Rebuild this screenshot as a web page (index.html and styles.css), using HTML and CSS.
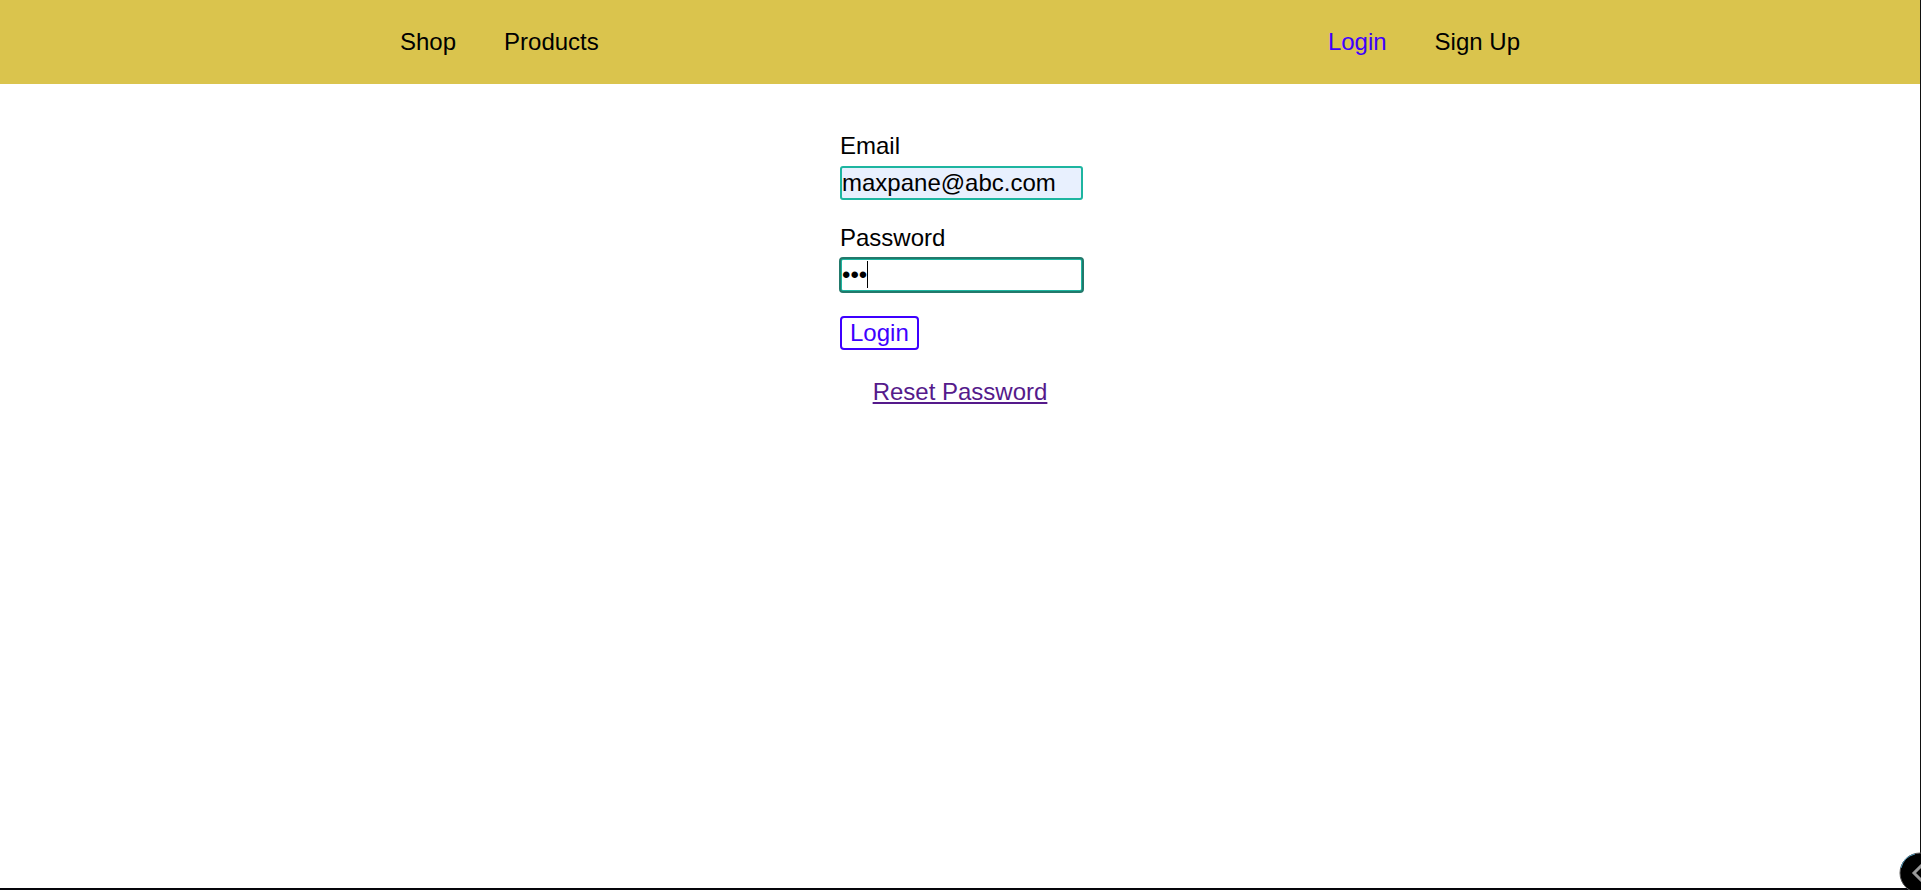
FILE: index.html
```html
<!DOCTYPE html>
<html lang="en">
<head>
<meta charset="utf-8">
<meta name="viewport" content="width=device-width, initial-scale=1">
<title>Login</title>
<link rel="stylesheet" href="styles.css">
</head>
<body>
<header class="main-header">
  <nav class="nav">
    <ul class="nav-list">
      <li><a class="nav-link" href="#shop">Shop</a></li>
      <li><a class="nav-link" href="#products">Products</a></li>
    </ul>
    <ul class="nav-list">
      <li><a class="nav-link active" href="#login">Login</a></li>
      <li><a class="nav-link" href="#signup">Sign Up</a></li>
    </ul>
  </nav>
</header>
<main class="content">
  <form class="login-form">
    <div class="form-control">
      <label for="email">Email</label>
      <input class="field filled" type="email" id="email" name="email" value="maxpane@abc.com">
    </div>
    <div class="form-control">
      <label for="password">Password</label>
      <div class="caret-box">
        <input class="field" type="password" id="password" name="password" value="abc">
      </div>
    </div>
    <button class="btn" type="submit">Login</button>
  </form>
  <a class="reset-link" href="#reset">Reset Password</a>
</main>
<button class="side-toggle" type="button" aria-label="Open panel">
  <svg width="42" height="42" viewBox="0 0 42 42" aria-hidden="true">
    <circle cx="21" cy="21" r="20" fill="#000" stroke="#555" stroke-width="1"/>
    <path d="M2 16A19 19 0 0 1 16 2" fill="none" stroke="#4f94b5" stroke-width="1"/>
    <path d="M23 13L15 21L23 29" fill="none" stroke="#999" stroke-width="3"/>
  </svg>
</button>
<script src="script.js"></script>
</body>
</html>
```

FILE: styles.css
```css
* {
  box-sizing: border-box;
}

body {
  margin: 0;
  min-height: 100vh;
  border-right: 1px solid #111;
  border-bottom: 2px solid #05050a;
  background: #fff;
  color: #000;
  font-family: "Liberation Sans", Arial, sans-serif;
  font-size: 24px;
  line-height: 28px;
  overflow: hidden;
}

.main-header {
  background: #dac44d;
  padding: 28px 400px;
}

.nav {
  display: flex;
  justify-content: space-between;
}

.nav-list {
  display: flex;
  gap: 48px;
  margin: 0;
  padding: 0;
  list-style: none;
}

.nav-link {
  color: #000;
  text-decoration: none;
}

.nav-link.active {
  color: #3e00ff;
}

.content {
  display: flex;
  flex-direction: column;
  align-items: center;
  gap: 28px;
  padding-top: 48px;
}

.login-form {
  display: flex;
  flex-direction: column;
  align-items: flex-start;
  gap: 24px;
  width: 240px;
}

.form-control {
  display: flex;
  flex-direction: column;
  gap: 6px;
}

.field {
  display: block;
  width: 243px;
  height: 34px;
  padding: 0;
  border: 2px solid #1db5a0;
  border-radius: 3px;
  background: #fff;
  color: #000;
  font: inherit;
}

.field.filled {
  background: #e8f0fe;
}

.field:focus {
  outline: 2px solid #22796b;
  outline-offset: -1px;
  caret-color: transparent;
}

.caret-box {
  position: relative;
}

.caret-box:focus-within::after {
  content: "";
  position: absolute;
  top: 3px;
  left: 27px;
  width: 1px;
  height: 27px;
  background: #000;
}

.btn {
  height: 34px;
  padding: 0 8px;
  border: 2px solid #3e00ff;
  border-radius: 4px;
  background: #fff;
  color: #3e00ff;
  font: inherit;
}

.reset-link {
  color: #551a8b;
}

.side-toggle {
  position: fixed;
  right: -20px;
  bottom: -4px;
  padding: 0;
  border: 0;
  background: none;
}

.side-toggle svg {
  display: block;
}
```

FILE: script.js
```js
const password = document.getElementById('password');
password.focus();
password.setSelectionRange(password.value.length, password.value.length);
```
